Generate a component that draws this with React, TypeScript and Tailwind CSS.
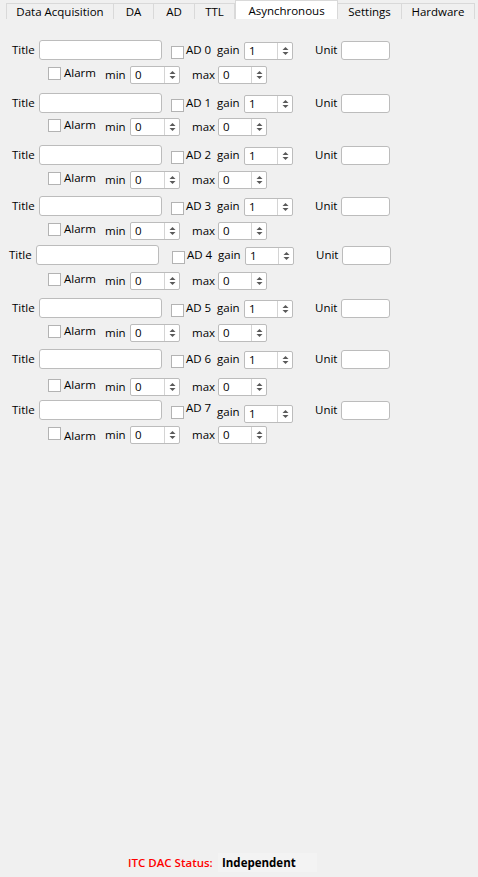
import React from "react";

const tabs = [
    { label: "Data Acquisition", w: "w-[108px]" },
    { label: "DA", w: "w-[40px]" },
    { label: "AD", w: "w-[41px]" },
    { label: "TTL", w: "w-[40px]" },
    { label: "Asynchronous", w: "w-[103px]", active: true },
    { label: "Settings", w: "w-[64px]" },
    { label: "Hardware", w: "w-[73px]" },
];

const rows = [
    { n: 0, top: "mt-[21px]", mid: "mt-[6px]" },
    { n: 1, top: "mt-[9px]", mid: "mt-[5px]" },
    { n: 2, top: "mt-[9px]", mid: "mt-[6px]" },
    { n: 3, top: "mt-[7px]", mid: "mt-[6px]" },
    { n: 4, top: "mt-[5px]", mid: "mt-[7px]", shifted: true },
    { n: 5, top: "mt-[8px]", mid: "mt-[6px]" },
    { n: 6, top: "mt-[7px]", mid: "mt-[9px]" },
    { n: 7, top: "mt-[4px]", mid: "mt-[6px]", odd: true },
];

function Check({ className = "" }: { className?: string }) {
    return <div className={`w-[13px] h-[13px] shrink-0 border border-[#b3b3b3] bg-white ${className}`} />;
}

function Spin({ value, className = "" }: { value: string; className?: string }) {
    return (
        <div className={`h-[18px] flex shrink-0 rounded-[2px] border border-[#bcbcbc] bg-white ${className}`}>
            <div className="flex-1 pl-[4px] leading-[16px]">{value}</div>
            <div className="w-[15px] border-l border-[#d4d4d4] flex items-center justify-center">
                <svg width="7" height="10" viewBox="0 0 7 10">
                    <path d="M0.5 4 L3.5 1 L6.5 4Z" fill="#5a5a5a" />
                    <path d="M0.5 6 L3.5 9 L6.5 6Z" fill="#5a5a5a" />
                </svg>
            </div>
        </div>
    );
}

function Row({ n, top, mid, shifted, odd }: { n: number; top: string; mid: string; shifted?: boolean; odd?: boolean }) {
    return (
        <div>
            <div className={`flex items-end h-[20px] ${top} ${shifted ? "pl-[9px]" : "pl-[12px]"}`}>
                <span className="w-[27px] leading-[20px]">Title</span>
                <div className="w-[123px] h-[20px] shrink-0 rounded-[3px] border border-[#bcbcbc] bg-white" />
                <Check className={`mb-[1px] ${shifted ? "ml-[13px]" : "ml-[9px]"}`} />
                <span className={`ml-[2px] w-[31px] leading-[20px] ${odd ? "-translate-y-[2px]" : ""}`}>AD {n}</span>
                <span className={`w-[27px] leading-[20px] ${odd ? "translate-y-[2px]" : ""}`}>gain</span>
                <Spin value="1" className={`w-[49px] ${odd ? "translate-y-[3px]" : ""}`} />
                <span className="ml-[22px] w-[26px] leading-[20px]">Unit</span>
                <div className="w-[49px] h-[19px] shrink-0 rounded-[3px] border border-[#bcbcbc] bg-white" />
            </div>
            <div className={`flex items-start h-[18px] pl-[48px] ${mid}`}>
                <Check className="mt-[1px]" />
                <span className={`ml-[3px] w-[41px] leading-[14px] ${odd ? "mt-[3px]" : "mt-[0px]"}`}>Alarm</span>
                <span className="w-[25px] leading-[18px]">min</span>
                <Spin value="0" className="w-[50px]" />
                <span className="w-[38px] pl-[12px] leading-[18px]">max</span>
                <Spin value="0" className="w-[49px]" />
            </div>
        </div>
    );
}

export default function App() {
    return (
        <div className="h-[877px] w-full flex flex-col bg-[#f0f0f0] text-black text-[11.5px] font-['Open_Sans',sans-serif]">
            <div className="h-[19px] flex items-end pl-[6px]">
                {tabs.map((t, i) => (
                    <div
                        key={t.label}
                        className={`${t.w} text-center border-t border-r border-[#d9d9d9] ${i === 0 ? "border-l" : ""} ${
                            t.active ? "h-[19px] pt-[2px] leading-[16px] bg-white border-l" : "h-[16px] leading-[15px]"
                        }`}
                    >
                        {t.label}
                    </div>
                ))}
            </div>
            {rows.map((r) => (
                <Row key={r.n} {...r} />
            ))}
            <div className="mt-auto mb-[5px] h-[19px] flex items-center pl-[128px]">
                <span className="w-[90px] font-semibold text-[#ff0000]">ITC DAC Status:</span>
                <div className="w-[99px] h-[19px] bg-[#f3f3f3] pl-[4px] leading-[19px] font-bold">Independent</div>
            </div>
        </div>
    );
}
